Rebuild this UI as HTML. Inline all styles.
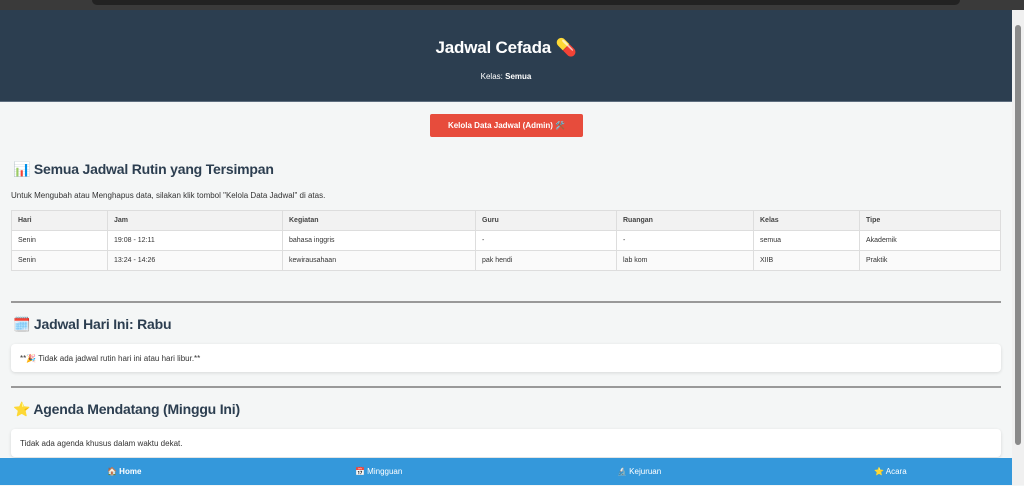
<!DOCTYPE html>
<html><head><meta charset="utf-8"><style>
*{box-sizing:border-box;margin:0;padding:0}
body{width:1024px;height:485px;overflow:hidden;background:#f4f6f6;font-family:"Liberation Sans","Noto Sans CJK SC",sans-serif;color:#333;position:relative}
.chrome{position:absolute;left:0;top:0;width:1024px;height:10px;background:#3a3a3a}
.chrome div{position:absolute;left:92px;top:0;width:868px;height:5px;background:#222;border-radius:0 0 6px 6px}
.sb{position:absolute;right:0;top:10px;width:12px;height:475px;background:#f0f0f0}
.sb div{position:absolute;left:3px;top:15px;width:6px;height:420px;background:#8a8a8a;border-radius:3px}
header{position:absolute;left:0;top:10px;width:1012px;height:92px;background:#2c3e50;color:#fff;text-align:center;border-bottom:1px solid #5d6d7e}
header h1{font-size:17px;margin-top:28px;letter-spacing:-0.2px}
header p{font-size:8px;margin-top:14px}
.btn{position:absolute;left:430px;top:114px;width:153px;height:23px;background:#e74c3c;color:#fff;font-size:8px;font-weight:bold;text-align:center;line-height:23px;border-radius:2px}
h2{position:absolute;left:13px;font-size:14px;font-weight:bold;color:#2c3e50;letter-spacing:-0.2px}
.txt{position:absolute;left:11px;top:191px;font-size:8px}
table{position:absolute;left:11px;top:210px;width:990px;border-collapse:collapse;table-layout:fixed;font-size:7px;background:#fff}
td,th{border:1px solid #ddd;height:20px;padding-left:6px;text-align:left}
th{background:#f2f2f2;font-weight:bold;color:#444}
tr:nth-child(3) td{background:#fafafa}
hr{position:absolute;left:11px;width:990px;border:0;border-top:2px solid #999}
.card{position:absolute;left:11px;width:990px;height:28px;background:#fff;border-radius:4px;box-shadow:0 1px 3px rgba(0,0,0,.12);font-size:8px;padding-left:9px;line-height:29px}
nav{position:absolute;left:0;top:458px;width:1012px;height:27px;background:#3498db;color:#fff;font-size:8px;line-height:28px}
nav span{position:absolute;top:0}
</style></head><body>
<div class="chrome"><div></div></div>
<header><h1>Jadwal Cefada 💊</h1><p>Kelas: <b>Semua</b></p></header>
<div class="btn">Kelola Data Jadwal (Admin) 🛠️</div>
<h2 style="top:161px">📊 Semua Jadwal Rutin yang Tersimpan</h2>
<div class="txt">Untuk Mengubah atau Menghapus data, silakan klik tombol "Kelola Data Jadwal" di atas.</div>
<table>
<colgroup><col style="width:96px"><col style="width:175px"><col style="width:193px"><col style="width:141px"><col style="width:137px"><col style="width:106px"><col></colgroup>
<tr><th>Hari</th><th>Jam</th><th>Kegiatan</th><th>Guru</th><th>Ruangan</th><th>Kelas</th><th>Tipe</th></tr>
<tr><td>Senin</td><td>19:08 - 12:11</td><td>bahasa inggris</td><td>-</td><td>-</td><td>semua</td><td>Akademik</td></tr>
<tr><td>Senin</td><td>13:24 - 14:26</td><td>kewirausahaan</td><td>pak hendi</td><td>lab kom</td><td>XIIB</td><td>Praktik</td></tr>
</table>
<hr style="top:301px">
<h2 style="top:316px">🗓️ Jadwal Hari Ini: Rabu</h2>
<div class="card" style="top:344px">**🎉 Tidak ada jadwal rutin hari ini atau hari libur.**</div>
<hr style="top:386px">
<h2 style="top:401px">⭐ Agenda Mendatang (Minggu Ini)</h2>
<div class="card" style="top:429px">Tidak ada agenda khusus dalam waktu dekat.</div>
<nav><span style="left:107px;font-weight:bold">🏠 Home</span><span style="left:355px">📅 Mingguan</span><span style="left:617px">🔬 Kejuruan</span><span style="left:874px">⭐ Acara</span></nav>
<div class="sb"><div></div></div>
</body></html>
